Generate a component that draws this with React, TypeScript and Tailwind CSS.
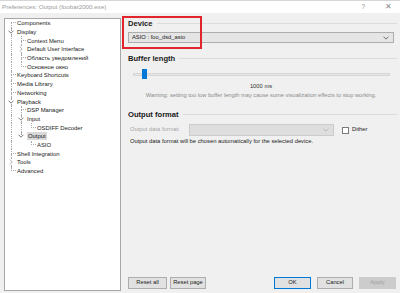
import React from 'react';

type Row = {
  label: string;
  level: number;
  guides: boolean[];
  first?: boolean;
  last?: boolean;
  exp?: 'open' | 'closed';
  selected?: boolean;
};

const rows: Row[] = [
  { label: 'Components', level: 0, guides: [], first: true },
  { label: 'Display', level: 0, guides: [], exp: 'open' },
  { label: 'Context Menu', level: 1, guides: [true] },
  { label: 'Default User Interface', level: 1, guides: [true], exp: 'closed' },
  { label: 'Область уведомлений', level: 1, guides: [true] },
  { label: 'Основное окно', level: 1, guides: [true], last: true },
  { label: 'Keyboard Shortcuts', level: 0, guides: [] },
  { label: 'Media Library', level: 0, guides: [] },
  { label: 'Networking', level: 0, guides: [] },
  { label: 'Playback', level: 0, guides: [], exp: 'open' },
  { label: 'DSP Manager', level: 1, guides: [true] },
  { label: 'Input', level: 1, guides: [true], exp: 'open' },
  { label: 'OSDIFF Decoder', level: 2, guides: [true, true], last: true },
  { label: 'Output', level: 1, guides: [true], exp: 'open', last: true, selected: true },
  { label: 'ASIO', level: 2, guides: [true, false], last: true },
  { label: 'Shell Integration', level: 0, guides: [] },
  { label: 'Tools', level: 0, guides: [], exp: 'closed' },
  { label: 'Advanced', level: 0, guides: [], last: true },
];

function Chevron({ open }: { open: boolean }) {
  return open ? (
    <svg width="6" height="4" viewBox="0 0 6 4" className="block">
      <path d="M0.5 0.7 L3 3.2 L5.5 0.7" fill="none" stroke="#6a6a6a" strokeWidth="0.9" />
    </svg>
  ) : (
    <svg width="4" height="6" viewBox="0 0 4 6" className="block">
      <path d="M0.8 0.5 L3.2 3 L0.8 5.5" fill="none" stroke="#a6a6a6" strokeWidth="0.9" />
    </svg>
  );
}

function TreeRow({ row }: { row: Row }) {
  return (
    <div className="flex h-[8.7px] items-stretch">
      {row.guides.map((g, i) => (
        <div key={i} className="w-[10px] shrink-0">
          {g && <div className="ml-[5px] h-full border-l border-dotted border-[#a8a8a8]" />}
        </div>
      ))}
      {row.exp ? (
        <div className="flex w-[10px] shrink-0 flex-col">
          <div className="ml-[5px] h-[2px] border-l border-dotted border-[#a8a8a8]" />
          <div className="flex flex-1 items-center justify-center">
            <Chevron open={row.exp === 'open'} />
          </div>
          <div
            className={
              row.last
                ? 'h-[2px]'
                : 'ml-[5px] h-[2px] border-l border-dotted border-[#a8a8a8]'
            }
          />
        </div>
      ) : (
        <div className="flex w-[10px] shrink-0 flex-col">
          <div
            className={
              row.first
                ? 'ml-[5px] h-1/2 border-b border-dotted border-[#a8a8a8]'
                : 'ml-[5px] h-1/2 border-b border-l border-dotted border-[#a8a8a8]'
            }
          />
          <div
            className={
              row.last ? 'h-1/2' : 'ml-[5px] h-1/2 border-l border-dotted border-[#a8a8a8]'
            }
          />
        </div>
      )}
      <div className="flex items-center pl-[1px]">
        <span
          className={
            row.selected
              ? 'whitespace-nowrap bg-[#d9d9d9] px-[1px] text-[5.9px] leading-[8px] text-[#222]'
              : 'whitespace-nowrap text-[5.9px] leading-[8px] text-[#222]'
          }
        >
          {row.label}
        </span>
      </div>
    </div>
  );
}

function GroupHeading({ title }: { title: string }) {
  return (
    <div className="-mr-[3px] flex h-[11px] items-center gap-[4px]">
      <span className="whitespace-nowrap text-[7.6px] font-bold leading-none text-[#1a1a1a]">
        {title}
      </span>
      <div className="h-px flex-1 bg-[#dcdcdc]" />
    </div>
  );
}

function Btn({
  label,
  w,
  variant = 'normal',
}: {
  label: string;
  w: string;
  variant?: 'normal' | 'default' | 'disabled';
}) {
  const base = 'flex h-[12px] items-center justify-center border text-[5.8px] leading-none ' + w;
  const v =
    variant === 'default'
      ? ' border-[#0078d7] bg-[#e1e1e1] text-[#222]'
      : variant === 'disabled'
      ? ' border-[#cccccc] bg-[#cccccc] text-[#a0a0a0]'
      : ' border-[#adadad] bg-[#e1e1e1] text-[#222]';
  return <div className={base + v}>{label}</div>;
}

export default function App() {
  return (
    <div
      className="relative flex h-[293px] w-[400px] flex-col overflow-hidden bg-[#f0f0f0]"
      style={{ fontFamily: '"Liberation Sans", "Noto Sans", sans-serif' }}
    >
      {/* Title bar */}
      <div className="flex h-[13px] shrink-0 items-center justify-between border-t border-[#d6d6d6] bg-white pl-[2px] pr-[8px]">
        <span className="text-[6.2px] leading-none text-[#9a9a9a]">
          Preferences: Output (foobar2000.exe)
        </span>
        <div className="flex items-center gap-[20px] text-[#8a8a8a]">
          <span className="text-[6.5px] leading-none">?</span>
          <span className="text-[8px] font-light leading-none">✕</span>
        </div>
      </div>

      {/* Body */}
      <div className="flex min-h-0 flex-1">
        {/* Tree */}
        <div className="mb-[2px] ml-[4px] mt-[5px] w-[117px] shrink-0 border border-[#a8a8a8] bg-white pl-[1px]">
          {rows.map((r, i) => (
            <TreeRow key={i} row={r} />
          ))}
        </div>

        {/* Right pane */}
        <div className="flex min-w-0 flex-1 flex-col pl-[7px] pr-[6px] pt-[5px]">
          <GroupHeading title="Device" />
          <div className="mt-[3px] flex h-[11px] items-center justify-between border border-[#adadad] bg-[#e5e5e5] pl-[3px] pr-[4px]">
            <span className="text-[5.8px] leading-none text-[#222]">ASIO : foo_dsd_asio</span>
            <svg width="6" height="4" viewBox="0 0 6 4">
              <path d="M0.6 0.8 L3 3.1 L5.4 0.8" fill="none" stroke="#555" strokeWidth="0.8" />
            </svg>
          </div>

          <div className="mt-[10px]">
            <GroupHeading title="Buffer length" />
          </div>
          <div className="ml-[5px] mr-[4px] mt-[5px] flex h-[10px] items-center">
            <div className="h-[3px] w-[9px] border-y border-l border-[#d6d6d6] bg-[#e7e7e7]" />
            <div className="h-[10px] w-[5px] bg-[#0078d7]" />
            <div className="h-[3px] flex-1 border-y border-r border-[#d6d6d6] bg-[#e7e7e7]" />
          </div>
          <div className="mt-[4px] flex h-[8px] items-center justify-center">
            <span className="text-[5.8px] leading-none text-[#333]">1000 ms</span>
          </div>
          <div className="mt-[1px] flex h-[8px] items-center justify-center">
            <span className="whitespace-nowrap text-[5.7px] leading-none text-[#8a8a8a]">
              Warning: setting too low buffer length may cause some visualization effects to stop working.
            </span>
          </div>

          <div className="mt-[9px]">
            <GroupHeading title="Output format" />
          </div>
          <div className="mt-[4px] flex h-[12px] items-center">
            <span className="ml-[2px] w-[59px] whitespace-nowrap text-[5.8px] leading-none text-[#a6a6a6]">
              Output data format:
            </span>
            <div className="flex h-[12px] w-[145px] items-center justify-end border border-[#cccccc] bg-[#dedede] pr-[4px]">
              <svg width="6" height="4" viewBox="0 0 6 4">
                <path d="M0.6 0.8 L3 3.1 L5.4 0.8" fill="none" stroke="#b0b0b0" strokeWidth="0.8" />
              </svg>
            </div>
            <div className="ml-[8px] h-[7px] w-[7px] border border-[#7a7a7a] bg-white" />
            <span className="ml-[3px] text-[5.8px] leading-none text-[#222]">Dither</span>
          </div>
          <div className="mt-[2px] flex h-[8px] items-center">
            <span className="ml-[2px] whitespace-nowrap text-[5.8px] leading-none text-[#222]">
              Output data format will be chosen automatically for the selected device.
            </span>
          </div>

          <div className="flex-1" />

          <div className="mb-[4px] flex items-center">
            <Btn label="Reset all" w="w-[39px]" />
            <div className="ml-[3px]">
              <Btn label="Reset page" w="w-[36px]" />
            </div>
            <div className="flex-1" />
            <Btn label="OK" w="w-[37px]" variant="default" />
            <div className="ml-[6px]">
              <Btn label="Cancel" w="w-[36px]" />
            </div>
            <div className="ml-[6px] -mr-[2px]">
              <Btn label="Apply" w="w-[37px]" variant="disabled" />
            </div>
          </div>
        </div>
      </div>

      {/* Red annotation box */}
      <div className="pointer-events-none absolute left-[122px] top-[16px] h-[33px] w-[80px] border-2 border-[#e0262c]" />
    </div>
  );
}
